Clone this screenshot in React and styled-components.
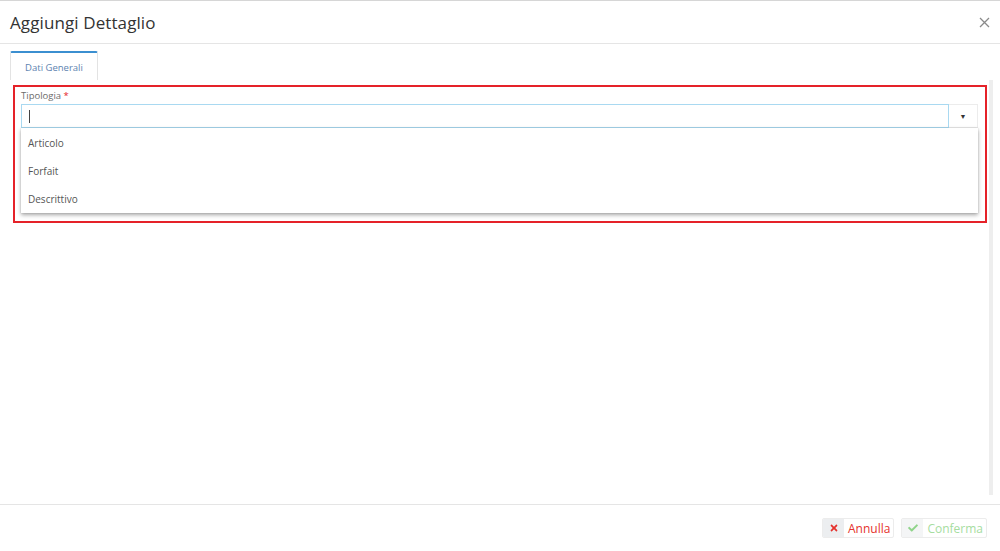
import React from "react";
import styled, { createGlobalStyle } from "styled-components";
import { FaTimes, FaCheck } from "react-icons/fa";

const Global = createGlobalStyle`
  html, body { margin: 0; padding: 0; background: #fff; }
  body { font-family: "Open Sans", "Liberation Sans", sans-serif; }
  * { box-sizing: border-box; }
`;

const Modal = styled.div`
  width: 1000px;
  height: 551px;
  display: flex;
  flex-direction: column;
  border-top: 1px solid #d6d6d6;
  background: #fff;
`;

const Header = styled.div`
  height: 43px;
  flex: none;
  display: flex;
  align-items: center;
  justify-content: space-between;
  padding: 0 10px 0 10px;
  border-bottom: 1px solid #e5e5e5;
`;

const Title = styled.h4`
  margin: 0;
  font-size: 17px;
  font-weight: 400;
  color: #333;
  letter-spacing: 0.1px;
`;

const Close = styled.button`
  border: 0;
  background: none;
  padding: 0;
  width: 12px;
  height: 12px;
  display: flex;
  align-items: center;
  justify-content: center;
  color: #888;
  cursor: pointer;
`;

const Body = styled.div`
  flex: 1;
  display: flex;
  min-height: 0;
`;

const Main = styled.div`
  flex: 1;
  padding: 7px 0 0 10px;
  display: flex;
  flex-direction: column;
`;

const ScrollTrack = styled.div`
  width: 4px;
  margin: 36px 7px 9px 1px;
  background: #eeeeee;
`;

const Tabs = styled.div`
  display: flex;
`;

const Tab = styled.div`
  width: 88px;
  height: 29px;
  display: flex;
  align-items: center;
  justify-content: center;
  border-top: 2px solid #3b8fd0;
  border-left: 1px solid #e3e3e3;
  border-right: 1px solid #e3e3e3;
  border-radius: 2px 2px 0 0;
  font-size: 9.5px;
  color: #5d83b0;
  padding-top: 1px;
`;

const Highlight = styled.div`
  margin: 5px 0 0 3px;
  width: 974px;
  height: 138px;
  border: 2px solid #e52229;
  padding: 2px 7px 0 6px;
`;

const Label = styled.div`
  font-size: 9.5px;
  color: #6b6b6b;
  height: 13px;
  line-height: 13px;
  margin-bottom: 2px;
  padding-left: 0;
  span { color: #e52229; }
`;

const Combo = styled.div`
  position: relative;
  display: flex;
  height: 24px;
`;

const Input = styled.div`
  flex: 1;
  border: 1px solid #a9d9f1;
  display: flex;
  align-items: center;
  padding-left: 7px;
`;

const Caret = styled.div`
  width: 1px;
  height: 13px;
  background: #444;
`;

const ToggleBtn = styled.div`
  width: 29px;
  border: 1px solid #ececec;
  border-left: 0;
  display: flex;
  align-items: center;
  justify-content: center;
  font-size: 7px;
  color: #333;
`;

const Menu = styled.ul`
  position: absolute;
  top: 24px;
  left: 0;
  right: 0;
  margin: 0;
  padding: 0;
  list-style: none;
  background: #fff;
  box-shadow: 0 2px 4px rgba(0, 0, 0, 0.35), 0 0 1px rgba(0, 0, 0, 0.2);
  z-index: 2;
`;

const Item = styled.li`
  height: 28px;
  display: flex;
  align-items: center;
  padding-left: 7px;
  font-size: 10px;
  color: #555;
  &:first-child { height: 29px; padding-top: 1px; }
`;

const Footer = styled.div`
  height: 47px;
  flex: none;
  border-top: 1px solid #e5e5e5;
  display: flex;
  align-items: center;
  justify-content: flex-end;
  gap: 7px;
  padding: 0 13px 0 0;
`;

const Btn = styled.button`
  height: 20px;
  display: flex;
  align-items: stretch;
  padding: 0;
  border: 1px solid #ececec;
  border-radius: 2px;
  background: #fff;
  font-family: inherit;
  font-size: 12px;
  overflow: hidden;
  cursor: ${(p) => (p.disabled ? "default" : "pointer")};
`;

const BtnIcon = styled.span`
  width: 21px;
  display: flex;
  align-items: center;
  justify-content: center;
  background: ${(p) => (p.$disabled ? "#f4f5f6" : "#eceef0")};
  color: ${(p) => p.$color};
  font-size: 10px;
`;

const BtnText = styled.span`
  display: flex;
  align-items: center;
  padding: 0 3px 0 4px;
  color: ${(p) => p.$color};
`;

export default function App() {
  return (
    <>
      <Global />
      <Modal>
        <Header>
          <Title>Aggiungi Dettaglio</Title>
          <Close aria-label="Chiudi">
            <svg width="11" height="11" viewBox="0 0 11 11">
              <path d="M1 1L10 10M10 1L1 10" stroke="#8a8a8a" strokeWidth="1.3" />
            </svg>
          </Close>
        </Header>
        <Body>
          <Main>
            <Tabs>
              <Tab>Dati Generali</Tab>
            </Tabs>
            <Highlight>
              <Label>
                Tipologia <span>*</span>
              </Label>
              <Combo>
                <Input>
                  <Caret />
                </Input>
                <ToggleBtn>▼</ToggleBtn>
                <Menu>
                  <Item>Articolo</Item>
                  <Item>Forfait</Item>
                  <Item>Descrittivo</Item>
                </Menu>
              </Combo>
            </Highlight>
          </Main>
          <ScrollTrack />
        </Body>
        <Footer>
          <Btn>
            <BtnIcon $color="#e5322d">
              <FaTimes />
            </BtnIcon>
            <BtnText $color="#e5322d">Annulla</BtnText>
          </Btn>
          <Btn disabled>
            <BtnIcon $disabled $color="#8fd48a">
              <FaCheck />
            </BtnIcon>
            <BtnText $color="#a6dd9f">Conferma</BtnText>
          </Btn>
        </Footer>
      </Modal>
    </>
  );
}
